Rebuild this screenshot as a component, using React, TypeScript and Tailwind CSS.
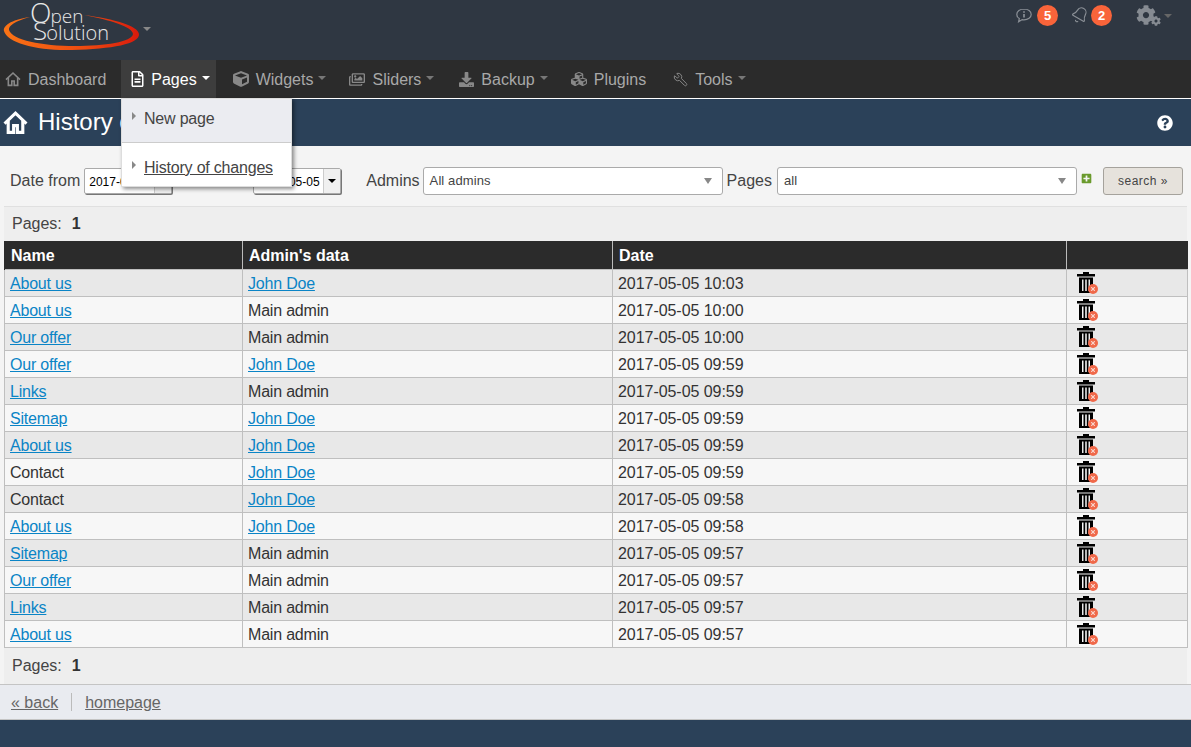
import { Bell, Wrench } from 'lucide-react';
import { FaCog, FaCube, FaCubes, FaDownload, FaPlusSquare, FaQuestionCircle, FaRegFileAlt, FaRegImages, FaTimes } from 'react-icons/fa';

const rows = [
  ['About us', 'John Doe', '2017-05-05 10:03', true],
  ['About us', 'Main admin', '2017-05-05 10:00', true],
  ['Our offer', 'Main admin', '2017-05-05 10:00', true],
  ['Our offer', 'John Doe', '2017-05-05 09:59', true],
  ['Links', 'Main admin', '2017-05-05 09:59', true],
  ['Sitemap', 'John Doe', '2017-05-05 09:59', true],
  ['About us', 'John Doe', '2017-05-05 09:59', true],
  ['Contact', 'John Doe', '2017-05-05 09:59', false],
  ['Contact', 'John Doe', '2017-05-05 09:58', false],
  ['About us', 'John Doe', '2017-05-05 09:58', true],
  ['Sitemap', 'Main admin', '2017-05-05 09:57', true],
  ['Our offer', 'Main admin', '2017-05-05 09:57', true],
  ['Links', 'Main admin', '2017-05-05 09:57', true],
  ['About us', 'Main admin', '2017-05-05 09:57', true],
] as const;

function Caret({ className = 'border-t-[#777]' }: { className?: string }) {
  return <span className={`inline-block w-0 h-0 border-x-[4px] border-x-transparent border-t-[4px] ${className}`} />;
}

function HouseIcon({ className, strokeWidth = 2 }: { className: string; strokeWidth?: number }) {
  return (
    <svg viewBox="0 0 24 24" fill="none" stroke="currentColor" strokeWidth={strokeWidth} strokeLinejoin="miter" className={className}>
      <path d="M1.5 13 12 3l10.5 10" />
      <path d="M5 10.500V21.500h5.200v-6.500h3.600v6.500H19V10.500" />
    </svg>
  );
}

function CommentInfoIcon({ className }: { className: string }) {
  return (
    <svg viewBox="0 0 16 15" fill="none" stroke="currentColor" strokeWidth="1.2" className={className}>
      <path d="M8 1C4 1 .8 3.300.8 6.400c0 1.700 1 3.200 2.500 4.200L2.600 13.800l3.600-2.200c.6.1 1.200.2 1.800.2 4 0 7.200-2.400 7.200-5.400S12 1 8 1Z" />
      <path d="M8 3.300v1.400M8 6v3.600" strokeWidth="1.700" />
    </svg>
  );
}

function Logo() {
  return (
    <svg width="142" height="54" viewBox="0 0 142 54" className="block">
      <defs>
        <linearGradient id="swoosh" x1="0" x2="1" y1="0" y2="0">
          <stop offset="0" stopColor="#f97316" />
          <stop offset="0.6" stopColor="#ee4a10" />
          <stop offset="1" stopColor="#d81a0c" />
        </linearGradient>
      </defs>
      <path d="M30 16C10 19 3 25 4 30C7 42 38 50 72 49C112 48 140 43 139 33C138 25 115 18 84 14C110 19 133 26 133 33C132 41 105 45 75 45C42 45 12 39 9 29C8 25 15 20 30 16Z" fill="url(#swoosh)" />
      <text x="30" y="22" fontFamily="'Open Sans', sans-serif" fontWeight="300" fill="#e8e8e8">
        <tspan fontSize="28">O</tspan>
        <tspan fontSize="19" dx="-1">pen</tspan>
      </text>
      <text x="33" y="39" fontFamily="'Open Sans', sans-serif" fontWeight="300" fill="#e8e8e8">
        <tspan fontSize="26">S</tspan>
        <tspan fontSize="20" dx="-1">olution</tspan>
      </text>
    </svg>
  );
}

function NavItem({ icon, label, caret = true, active = false, className = '' }: { icon: React.ReactNode; label: string; caret?: boolean; active?: boolean; className?: string }) {
  return (
    <div className={`h-[38px] flex items-center pl-[8px] pr-[6px] ${active ? 'bg-[#3d3d3d] text-white' : 'text-[#a8a8a8]'} ${className}`}>
      <span className={`w-[16px] flex justify-center ${active ? 'mr-[6px]' : 'mr-[7px]'}`}>{icon}</span>
      <span className="pt-[2px]">{label}</span>
      {caret && <span className="ml-[5px] -mt-[3px] flex"><Caret className={active ? 'border-t-white' : 'border-t-[#777]'} /></span>}
    </div>
  );
}

function DateSelect({ value, className }: { value: string; className: string }) {
  return (
    <div className={`h-[26px] flex items-stretch bg-white border border-[#aaa] rounded-[2px] shadow-[1px_1px_0_#777] text-[12px] text-black overflow-hidden ${className}`}>
      <span className="flex-1 pl-[4px] leading-[26px] whitespace-nowrap">{value}</span>
      <span className="w-[17px] bg-[#f0f0f0] border-l border-[#ccc] flex items-center justify-center"><Caret className="border-t-black" /></span>
    </div>
  );
}

function Combo({ value, className }: { value: string; className: string }) {
  return (
    <div className={`h-[28px] flex items-center justify-between bg-white border border-[#aaa] rounded-[3px] pl-[6px] pr-[10px] text-[13px] tracking-[0.1px] text-[#444] ${className}`}>
      <span>{value}</span>
      <span className="flex border-x-[4px] border-x-transparent border-t-[6px] border-t-[#888]" />
    </div>
  );
}

function PagesBar({ className }: { className: string }) {
  return (
    <div className={`mx-[4px] bg-[#eeeeee] pl-[8px] text-[16px] text-[#444] flex items-center gap-[10px] ${className}`}>
      <span>Pages:</span>
      <b className="text-[#333]">1</b>
    </div>
  );
}

function TrashIcon() {
  return (
    <span className="relative block w-[22px] h-[22px]">
      <svg viewBox="0 0 18 21" className="block w-[18px] h-[21px] text-black" fill="currentColor">
        <path d="M6 0h6v2h6v2.500H0V2h6z" />
        <path fillRule="evenodd" d="M2 5.500h14V21H2zM5 7.500v11.500h1.500V7.500zM8.200 7.500v11.500h1.600V7.500zM11.500 7.500v11.500H13V7.500z" />
      </svg>
      <span className="absolute right-[1px] bottom-0 w-[10px] h-[10px] rounded-full bg-[#f0694a] flex items-center justify-center">
        <FaTimes className="w-[6px] h-[6px] text-[#f8d8d0]" />
      </span>
    </span>
  );
}

export default function App() {
  return (
    <div className="w-[1191px] h-[747px] overflow-hidden relative bg-[#f4f4f4] font-['Liberation_Sans',Arial,sans-serif] text-[16px]">
      <header className="h-[60px] bg-[#2f3742] flex justify-between">
        <div className="flex items-start pt-[1px]">
          <Logo />
          <span className="ml-[1px] mt-[13px]"><Caret className="border-t-[#888]" /></span>
        </div>
        <div className="flex items-start pt-[5px] pr-[19px] text-[#8a8f96]">
          <CommentInfoIcon className="w-[16px] h-[15px] mt-[3px]" />
          <span className="ml-[5px] w-[21px] h-[21px] rounded-full bg-[#f9643a] text-white text-[13px] font-bold flex items-center justify-center">5</span>
          <Bell className="ml-[13px] w-[18px] h-[18px] mt-[1px] rotate-[30deg]" strokeWidth={1.5} />
          <span className="ml-[2px] w-[21px] h-[21px] rounded-full bg-[#f9643a] text-white text-[13px] font-bold flex items-center justify-center">2</span>
          <span className="ml-[24px] w-[25px] h-[22px] relative text-[#868b92]">
            <FaCog className="w-[20px] h-[20px]" />
            <FaCog className="absolute right-0 bottom-[1px] w-[10px] h-[10px]" />
          </span>
          <span className="ml-[3px] mt-[9px] flex"><Caret className="border-t-[#666]" /></span>
        </div>
      </header>

      <nav className="h-[39px] bg-[#2b2b2b] border-b border-white flex gap-[9px]">
        <NavItem className="!pl-[5px]" icon={<HouseIcon className="w-[16px] h-[16px] text-[#888]" strokeWidth={2.4} />} label="Dashboard" caret={false} />
        <NavItem icon={<FaRegFileAlt className="w-[15px] h-[16px] text-white" />} label="Pages" active />
        <NavItem icon={<FaCube className="w-[16px] h-[16px] text-[#888]" />} label="Widgets" />
        <NavItem icon={<FaRegImages className="w-[17px] h-[15px] text-[#888]" />} label="Sliders" />
        <NavItem className="ml-[1px]" icon={<FaDownload className="w-[15px] h-[15px] text-[#888]" />} label="Backup" />
        <NavItem icon={<FaCubes className="w-[17px] h-[16px] text-[#888]" />} label="Plugins" caret={false} />
        <NavItem className="ml-[3px]" icon={<Wrench className="w-[15px] h-[15px] text-[#888] -scale-x-100" strokeWidth={1.6} />} label="Tools" />
      </nav>

      <div className="h-[47px] bg-[#2b4159] flex items-center justify-between pl-[3px] pr-[18px] text-white">
        <div className="flex items-center gap-[10px]">
          <HouseIcon className="w-[25px] h-[25px]" strokeWidth={3} />
          <span className="text-[24px] -mt-[2px]">History of changes</span>
        </div>
        <FaQuestionCircle className="w-[16px] h-[16px]" />
      </div>

      <div className="h-[60px] flex items-center pl-[10px] pt-[10px] text-[#444]">
        <span className="-mt-[1px]">Date from</span>
        <DateSelect value="2017-05-05" className="ml-[4px] w-[88px]" />
        <span className="ml-[10px] w-[71px]">to</span>
        <DateSelect value="2017-05-05" className="w-[88px] justify-end" />
        <span className="ml-[25px] -mt-[1px]">Admins</span>
        <Combo value="All admins" className="ml-[3px] w-[300px]" />
        <span className="ml-[4px] -mt-[1px]">Pages</span>
        <Combo value="all" className="ml-[5px] w-[300px]" />
        <FaPlusSquare className="ml-[4px] -mt-[6px] w-[11px] h-[11px] text-[#6a9a2c]" />
        <button className="ml-[11px] w-[80px] h-[28px] bg-[#e6e2dc] border border-[#a5a29c] rounded-[3px] text-[12px] tracking-[0.5px] text-[#444]">search »</button>
      </div>

      <PagesBar className="h-[35px] border-t border-[#e0e0e0]" />

      <table className="mx-[4px] w-[1183px] table-fixed border-collapse text-[16px]">
        <colgroup>
          <col className="w-[238px]" />
          <col className="w-[370px]" />
          <col className="w-[454px]" />
          <col className="w-[121px]" />
        </colgroup>
        <thead>
          <tr className="h-[28px] bg-[#2b2b2b] text-white font-bold">
            <th className="pl-[6px] pt-[2px] text-left border-l border-l-[#2b2b2b] border-r border-r-[#bbb]">Name</th>
            <th className="pl-[6px] pt-[2px] text-left border-r border-[#bbb]">Admin's data</th>
            <th className="pl-[6px] pt-[2px] text-left border-r border-[#bbb]">Date</th>
            <th />
          </tr>
        </thead>
        <tbody className="text-[#333]">
          {rows.map(([name, admin, date, linked], i) => (
            <tr key={i} className={`h-[27px] ${i % 2 === 0 ? 'bg-[#e8e8e8]' : 'bg-[#f7f7f7]'}`}>
              <td className="pl-[5px] pt-[2px] pb-0 pr-0 border border-[#bfbfbf] tracking-[-0.2px]">
                {linked ? <a href="#" className="text-[#0a84c6] underline">{name}</a> : name}
              </td>
              <td className="pl-[5px] pt-[2px] pb-0 pr-0 border border-[#bfbfbf] tracking-[-0.2px]">
                {admin === 'John Doe' ? <a href="#" className="text-[#0a84c6] underline">{admin}</a> : admin}
              </td>
              <td className="pl-[5px] pt-[2px] pb-0 pr-0 border border-[#bfbfbf] tracking-[-0.05px]">{date}</td>
              <td className="pl-[10px] p-0 border border-[#bfbfbf]"><TrashIcon /></td>
            </tr>
          ))}
        </tbody>
      </table>

      <PagesBar className="h-[36px]" />

      <div className="h-[36px] bg-[#e9ebf0] border-y border-[#c4c4c4] flex items-center pl-[11px] pt-[2px] text-[#666]">
        <a href="#" className="underline">« back</a>
        <span className="mx-[13px] w-px h-[18px] -mt-[2px] bg-[#bbb]" />
        <a href="#" className="underline">homepage</a>
      </div>
      <div className="h-[27px] bg-[#2b4159]" />

      <div className="absolute left-[121px] top-[98px] w-[171px] h-[89px] bg-white border border-[#ddd] shadow-[2px_2px_4px_rgba(0,0,0,0.45)] text-[#444] tracking-[-0.2px]">
        <div className="h-[44px] bg-[#ebecf1] border-b border-[#ccc] flex pl-[10px] pt-[8px] gap-[8px]">
          <span className="mt-[5px] h-0 border-y-[4px] border-y-transparent border-l-[4px] border-l-[#888]" />
          <span>New page</span>
        </div>
        <div className="flex pl-[10px] pt-[13px] gap-[8px]">
          <span className="mt-[5px] h-0 border-y-[4px] border-y-transparent border-l-[4px] border-l-[#888]" />
          <a href="#" className="underline">History of changes</a>
        </div>
      </div>
    </div>
  );
}
